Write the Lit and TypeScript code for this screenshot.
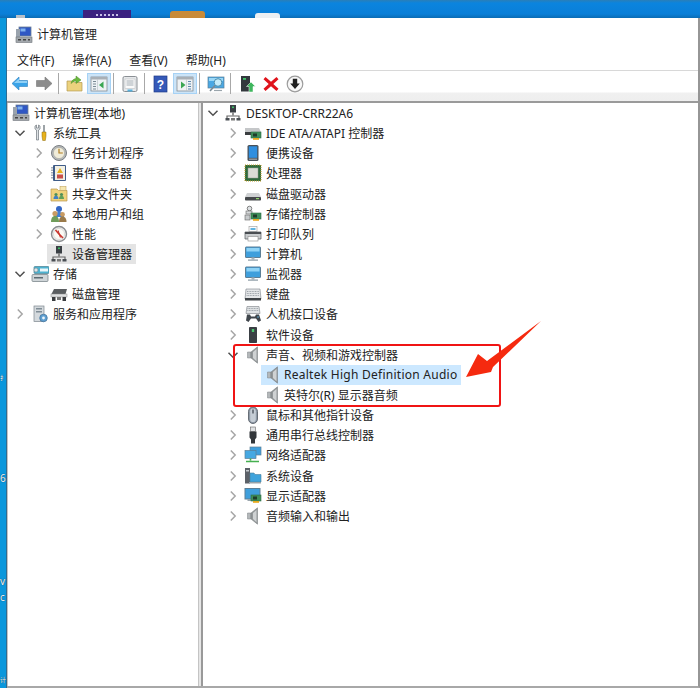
import { LitElement, html, css, svg, nothing } from "lit";
import { customElement } from "lit/decorators.js";

const monitorScreen = svg`<rect x="1.5" y="2" width="15" height="10.5" rx=".5" fill="#3f9fdc" stroke="#5c7f96"/><rect x="2.5" y="3" width="13" height="3.5" fill="#8fd3f6"/><rect x="7.5" y="12.5" width="3" height="2" fill="#a8b4bc"/><rect x="4" y="14.5" width="10" height="1.2" fill="#8b9aa4"/>`;
const greenCard = svg`<rect x="7" y="8" width="10" height="6" fill="#3f8f5a" stroke="#2c6b43" stroke-width=".6"/><rect x="9" y="9.5" width="4" height="3" fill="#1f3d2b"/><rect x="9" y="14" width="6" height="1.8" fill="#e6a91e"/>`;
const speaker = svg`<path d="M3.5 6h3.5v6H3.500z" fill="#b4b8ba" stroke="#7d8284" stroke-width=".5"/><path d="M7 6 13.500 .8V17.200L7 12z" fill="#94989a" stroke="#6f7476" stroke-width=".5"/><path d="M9 6 12.500 3V15.200L9 12z" fill="#cfd2d3"/>`;
const computerTree = svg`<rect x="6" y="1" width="6" height="7.5" fill="#3a3f44"/><rect x="8" y="2.5" width="2" height="1.6" fill="#3fbf66"/><rect x="8.3" y="8.5" width="1.4" height="3" fill="#666"/><path d="M3 15.5v-3.5h12v3.5" fill="none" stroke="#666" stroke-width="1.2"/><rect x="1.5" y="14" width="4" height="2.5" fill="#4a4f54"/><rect x="12.5" y="14" width="4" height="2.5" fill="#4a4f54"/><rect x="7" y="14" width="4" height="2.5" fill="#777"/>`;

const ICONS: Record<string, unknown> = {
  mgmt: svg`<rect x="4" y="1" width="12" height="9" fill="#2f57c4" stroke="#6c7f95" stroke-width=".8"/><rect x="5.5" y="2.5" width="5" height="3" fill="#7fb2ee"/><rect x="1" y="3" width="4" height="9" fill="#9aa3ad"/><rect x="1" y="11" width="16" height="5.5" fill="#a3a8ad" stroke="#6f757a" stroke-width=".6"/><rect x="3" y="13" width="3" height="1.5" fill="#444"/><rect x="8" y="13" width="3" height="1.5" fill="#444"/><rect x="13" y="13" width="2" height="1.5" fill="#444"/>`,
  tools: svg`<path d="M4 2v3l1.5 1v10h2V6L9 5V2L7.5 1v3h-2V1z" fill="#dfe3e6" stroke="#6f767c" stroke-width=".7"/><rect x="12" y="1" width="2" height="7" fill="#9ea4a8"/><path d="M11 8h4v4l-.7 4.5h-2.6L11 12z" fill="#e8b21c" stroke="#8f6d10" stroke-width=".5"/>`,
  clock: svg`<circle cx="9" cy="9" r="7.5" fill="#b6b9bb" stroke="#7b7f82"/><circle cx="9" cy="9" r="5.6" fill="#f0ecd9" stroke="#9d9f99" stroke-width=".5"/><path d="M9 4.8V9h3.8" fill="none" stroke="#b07c20" stroke-width="1.2"/>`,
  event: svg`<rect x="3" y="1" width="13" height="16" rx="1" fill="#3f5c88"/><rect x="5" y="2" width="10" height="14" fill="#f2f0e4"/><path d="M10 4l3 5h-6z" fill="#e8b21c"/><rect x="7" y="10.5" width="6" height="4" fill="#c9504a"/><path d="M2 3v12" stroke="#8a94a0" stroke-width="1.5" stroke-dasharray="1.5 1"/>`,
  share: svg`<path d="M1 4h6l1.5 1.5H17V16H1z" fill="#f0d27c" stroke="#b9974a" stroke-width=".7"/><rect x="10" y="1.5" width="6" height="4" fill="#f6e7b0" stroke="#b9974a" stroke-width=".5"/><circle cx="6" cy="9.5" r="1.6" fill="#4e8f5a"/><path d="M3.5 14c0-2.5 1-3 2.5-3s2.5.5 2.5 3z" fill="#3f7fc4"/><circle cx="11.5" cy="9.5" r="1.6" fill="#4e8f5a"/><path d="M9 14c0-2.5 1-3 2.5-3s2.5.5 2.5 3z" fill="#5f9f5a"/>`,
  users: svg`<circle cx="9" cy="4" r="3" fill="#3467c4"/><path d="M5 12c0-4 2-5 4-5s5 1 5 5z" fill="#3f7fd4"/><circle cx="5" cy="8.5" r="2.6" fill="#c99b62"/><path d="M1 17c0-4.500 2-6 4-6s4 1.500 4 6z" fill="#6f9c5a"/><circle cx="12.500" cy="9.500" r="2.400" fill="#c99b62"/><path d="M9 17c0-4 1.500-5.500 3.500-5.500S16.500 13 16.500 17z" fill="#9a7a4a"/>`,
  perf: svg`<circle cx="9" cy="9" r="7.5" fill="#eee" stroke="#8a8d90" stroke-width="1.4"/><circle cx="9" cy="9" r="5.5" fill="#fbfaf5" stroke="#c4c4c0" stroke-width=".5"/><path d="M5.500 5l3 3.500 1 1 3.500 3.500" fill="none" stroke="#c8352e" stroke-width="1.600"/><path d="M8 5.500l2.500 7" fill="none" stroke="#c8352e" stroke-width="1.100"/>`,
  devmgr: computerTree,
  root: computerTree,
  storage: svg`<rect x="1" y="9.500" width="16" height="7" rx="1" fill="#cfd5d8" stroke="#6f7a80" stroke-width=".7"/><rect x="3" y="12" width="9" height="1.500" fill="#5b6a72"/><rect x="3" y="1.500" width="15" height="7" rx="1" fill="#4cb2d0" stroke="#4a7f90" stroke-width=".7"/><rect x="9" y="3.500" width="8" height="3" fill="#eaf6fa"/><circle cx="5" cy="5" r="2" fill="#dfe6e9" stroke="#6f7a80" stroke-width=".5"/>`,
  diskm: svg`<path d="M4 4h13l-1.500 5H1.500z" fill="#5a5d60"/><rect x="1" y="9" width="16" height="3" fill="#dfe0e1" stroke="#888" stroke-width=".5"/><rect x="2" y="12" width="3.500" height="4" fill="#3a3c3f"/><rect x="12.500" y="12" width="3.500" height="4" fill="#3a3c3f"/><rect x="7" y="12" width="4" height="3" fill="#777"/>`,
  services: svg`<rect x="3" y="1" width="10" height="15.500" fill="#d4d9dd" stroke="#7d878e" stroke-width=".7"/><rect x="5" y="3" width="6" height="1.500" fill="#7f8c95"/><rect x="5" y="6" width="6" height="1.500" fill="#7f8c95"/><circle cx="12.500" cy="13" r="3.800" fill="#5f9fd0" stroke="#3f6f96" stroke-width=".7"/><circle cx="12.500" cy="13" r="1.400" fill="#eef6fb"/>`,
  ide: svg`<path d="M1 4h14l2 4H1z" fill="#c5c7c9"/><rect x="1" y="8" width="10" height="3" fill="#3a3d40"/>${greenCard}`,
  portable: svg`<rect x="3.500" y="1" width="11" height="16" rx="1.500" fill="#4a5158"/><rect x="4.800" y="2.300" width="8.400" height="11.500" fill="#2f8fe0"/><rect x="5" y="14.500" width="8" height="1.500" fill="#8e959b"/>`,
  cpu: svg`<rect x="1" y="1" width="16" height="16" fill="#2e6b3e" stroke="#c09a2a" stroke-dasharray="1 1"/><rect x="4" y="4" width="10" height="10" fill="#dadcd6" stroke="#9a9c96" stroke-width=".5"/>`,
  disk: svg`<path d="M3 8h12l2 4H1z" fill="#cfd1d3"/><rect x="1" y="12" width="16" height="3.500" rx=".8" fill="#45484b"/><rect x="12" y="13" width="3" height="1.200" fill="#8fd46f"/>`,
  storctl: svg`<circle cx="5.500" cy="3.500" r="2.300" fill="#e0e3e5" stroke="#555" stroke-width=".7"/><rect x="2" y="6" width="6" height="3" fill="#d7dadc" stroke="#666" stroke-width=".6"/><rect x="1" y="10" width="5" height="5" fill="#c7cacc" stroke="#666" stroke-width=".6"/>${greenCard}`,
  printer: svg`<rect x="5" y="1.500" width="8" height="5" fill="#fdfdfd" stroke="#9a9a9a" stroke-width=".6"/><rect x="6.500" y="3" width="5" height="2" fill="#5fb3e0"/><path d="M1 7h16v7H1z" fill="#c9ccce" stroke="#55595c" stroke-width=".7"/><rect x="1" y="7" width="16" height="2" fill="#4a4e52"/><rect x="4" y="11.500" width="10" height="4.500" fill="#fff" stroke="#8a8a8a" stroke-width=".6"/>`,
  computer: monitorScreen,
  monitor: monitorScreen,
  keyboard: svg`<path d="M2 4h14l1 10H1z" fill="#e4e6e8" stroke="#7a8086" stroke-width=".6"/><path d="M3 6.500h12M2.800 8.500h12.400M2.600 10.500h12.800" stroke="#9ea4aa" stroke-dasharray="1 .6"/><rect x="1" y="13" width="16" height="2.500" fill="#3f4347"/>`,
  hid: svg`<path d="M3 1.500h12l1 7H2z" fill="#dfe2e4" stroke="#7a8086" stroke-width=".6"/><path d="M3.500 3.500h11M3.300 5.500h11.400" stroke="#9ea4aa" stroke-dasharray="1 .6"/><path d="M3 9.500h3l1 2h4l1-2h3l2 6-2.500 1.500-2.500-3.500H7l-2.500 3.500L2 15.500z" fill="#40464c"/><circle cx="14" cy="12" r=".8" fill="#5fb3e0"/>`,
  software: svg`<rect x="5" y="1" width="8" height="16" rx=".8" fill="#3a3f44"/><rect x="7.800" y="3" width="2.400" height="3" fill="#4ac46e"/>`,
  speaker,
  mouse: svg`<rect x="4.500" y="1" width="9" height="16.500" rx="4.500" fill="#8f9aa6" stroke="#4e565e" stroke-width=".8"/><rect x="6.200" y="2.500" width="5.600" height="13.500" rx="2.800" fill="#c6ced6"/><rect x="8.300" y="3.500" width="1.400" height="4" fill="#4e565e"/>`,
  usb: svg`<rect x="6.500" y="1" width="5" height="4.500" fill="#dfe1e3" stroke="#666" stroke-width=".6"/><path d="M5.500 5.500h7v6l-1.500 2v4H7v-4l-1.500-2z" fill="#33373b"/>`,
  network: svg`<rect x="6" y="1" width="11" height="8" fill="#3f9fdc" stroke="#5c7f96" stroke-width=".7"/><rect x="1" y="4.500" width="11" height="8" fill="#46a8e2" stroke="#5c7f96" stroke-width=".7"/><path d="M6.500 12.500v2M2 15.500h13" stroke="#46b04f" stroke-width="1.600"/>`,
  system: svg`<rect x="1" y="1" width="5" height="15.500" fill="#5c6168"/><rect x="2" y="3" width="3" height="1.500" fill="#c5cace"/><path d="M6 6h4l1 1.500h6V15H6z" fill="#3fa3dc" stroke="#4a7f9c" stroke-width=".6"/><rect x="5" y="15" width="12" height="1.500" fill="#9aa3a9"/>`,
  display: svg`<rect x="1" y="1.500" width="15" height="10.500" fill="#3f9fdc" stroke="#5c7f96"/><rect x="3.500" y="12" width="8" height="2" fill="#9aa5ac"/>${greenCard}`,
};

const ICON_TB: Record<string, unknown> = {
  back: svg`<path d="M1 8.500 8 2v3.500h8.500v6H8V15z" fill="#3aa3e8" stroke="#2f7fbe" stroke-width=".6"/><path d="M3 8 8 3.500V6h8v2z" fill="#8fd0f6"/>`,
  fwd: svg`<path d="M17 8.500 10 2v3.500H1.500v6H10V15z" fill="#8c8c8c" stroke="#757575" stroke-width=".6"/>`,
  up: svg`<path d="M1 6h6l1.500 1.500H16V16H1z" fill="#ecd27e" stroke="#b39a50" stroke-width=".7"/><path d="M5 8.500c.5-3 2.500-4.500 5-5V1l5 4-5 3.500V6c-2 .3-3.500 1-5 2.500z" fill="#6cb93e" stroke="#4a8a2a" stroke-width=".5"/>`,
  pane: svg`<rect x="1" y="2" width="16" height="14" fill="#eef2f5" stroke="#7a8288" stroke-width=".7"/><rect x="1" y="2" width="16" height="2.500" fill="#a9b0b6"/><path d="M3 6.500h3M3 9h3M3 11.500h3M3 14h3" stroke="#7a8a94" stroke-width="1"/><path d="M13.500 6.500v7L9 10z" fill="#3aa653"/><path d="M7.500 4.500v11.500" stroke="#b9c0c5" stroke-width=".6"/>`,
  pane2: svg`<rect x="1" y="2" width="16" height="14" fill="#eef2f5" stroke="#7a8288" stroke-width=".7"/><rect x="1" y="2" width="16" height="2.500" fill="#a9b0b6"/><path d="M12 6.500h3M12 9h3M12 11.500h3M12 14h3" stroke="#5c87ac" stroke-width="1"/><path d="M5 6.500v7L9.500 10z" fill="#3aa653"/><path d="M10.500 4.500v11.500" stroke="#b9c0c5" stroke-width=".6"/>`,
  props: svg`<rect x="2" y="1.500" width="14" height="15" rx="1.500" fill="#e6e8ea" stroke="#8a8f94"/><rect x="4" y="4" width="10" height="9.500" fill="#fafafa" stroke="#b5b9bd" stroke-width=".5"/><path d="M5.500 6h7M5.500 8h7M5.500 10h7" stroke="#9aa4ab" stroke-width=".9"/><rect x="6.500" y="14.500" width="5" height="2" fill="#56b0dc"/>`,
  help: svg`<rect x="2" y="1" width="13" height="16" fill="#3559b8" stroke="#1f3a86" stroke-width=".7"/><text x="8.500" y="13.500" font-size="12" font-weight="700" text-anchor="middle" fill="#fff" font-family="Liberation Sans, sans-serif">?</text>`,
  search: svg`<rect x="1" y="2" width="16" height="11" fill="#4aa8e4" stroke="#5c7f96" stroke-width=".7"/><rect x="2" y="3" width="14" height="3" fill="#9ad8f8"/><circle cx="11" cy="7.500" r="3.800" fill="#c6ecfa" stroke="#4e8fae"/><path d="M8 10.500 3 16" stroke="#7a8a94" stroke-width="1.600"/><path d="M7 15.500h8" stroke="#9aa5ac" stroke-width="1.200"/>`,
  update: svg`<rect x="3" y="1" width="9" height="15.500" fill="#33383d"/><rect x="5" y="3" width="3" height="1.800" fill="#43c56b"/><path d="M13 7l4.500 4.500H15V17h-4v-5.500H8.500z" fill="#3fb65e" stroke="#fff" stroke-width=".5"/>`,
  del: svg`<path d="M3.500 2 9 6.800 14.500 2l2 2.200L11.300 9l5.200 4.800-2 2.200L9 11.200 3.500 16l-2-2.200L6.700 9 1.500 4.200z" fill="#e0141c"/>`,
  down: svg`<circle cx="9" cy="9" r="7.800" fill="#f8f8f8" stroke="#9c9c9c" stroke-width="1.200"/><path d="M6.800 3.800h4.400v4.800h2.600L9 14 4.200 8.600h2.600z" fill="#1f1f1f"/>`,
};

type Node = { l: number; icon: string; text: string; chev?: "r" | "d"; sel?: "grey" | "blue"; wide?: boolean; tight?: boolean; top?: boolean };

const LEFT: Node[] = [
  { l: 1, icon: "mgmt", text: "计算机管理(本地)", top: true },
  { l: 3, icon: "tools", text: "系统工具", chev: "d" },
  { l: 22, icon: "clock", text: "任务计划程序", chev: "r" },
  { l: 22, icon: "event", text: "事件查看器", chev: "r" },
  { l: 22, icon: "share", text: "共享文件夹", chev: "r" },
  { l: 22, icon: "users", text: "本地用户和组", chev: "r" },
  { l: 22, icon: "perf", text: "性能", chev: "r" },
  { l: 22, icon: "devmgr", text: "设备管理器", sel: "grey" },
  { l: 3, icon: "storage", text: "存储", chev: "d" },
  { l: 22, icon: "diskm", text: "磁盘管理" },
  { l: 3, icon: "services", text: "服务和应用程序", chev: "r" },
];

const RIGHT: Node[] = [
  { l: 1, icon: "root", text: "DESKTOP-CRR22A6", chev: "d" },
  { l: 21, icon: "ide", text: "IDE ATA/ATAPI 控制器", chev: "r" },
  { l: 21, icon: "portable", text: "便携设备", chev: "r" },
  { l: 21, icon: "cpu", text: "处理器", chev: "r" },
  { l: 21, icon: "disk", text: "磁盘驱动器", chev: "r" },
  { l: 21, icon: "storctl", text: "存储控制器", chev: "r" },
  { l: 21, icon: "printer", text: "打印队列", chev: "r" },
  { l: 21, icon: "computer", text: "计算机", chev: "r" },
  { l: 21, icon: "monitor", text: "监视器", chev: "r" },
  { l: 21, icon: "keyboard", text: "键盘", chev: "r" },
  { l: 21, icon: "hid", text: "人机接口设备", chev: "r" },
  { l: 21, icon: "software", text: "软件设备", chev: "r" },
  { l: 21, icon: "speaker", text: "声音、视频和游戏控制器", chev: "d" },
  { l: 41, icon: "speaker", text: "Realtek High Definition Audio", sel: "blue", wide: true, tight: true },
  { l: 41, icon: "speaker", text: "英特尔(R) 显示器音频", tight: true },
  { l: 21, icon: "mouse", text: "鼠标和其他指针设备", chev: "r" },
  { l: 21, icon: "usb", text: "通用串行总线控制器", chev: "r" },
  { l: 21, icon: "network", text: "网络适配器", chev: "r" },
  { l: 21, icon: "system", text: "系统设备", chev: "r" },
  { l: 21, icon: "display", text: "显示适配器", chev: "r" },
  { l: 21, icon: "speaker", text: "音频输入和输出", chev: "r" },
];

const DESK_MARKS = [
  { y: 371, t: "扌", s: 6 },
  { y: 471, t: "6", s: 10 },
  { y: 574, t: "v", s: 10 },
  { y: 590, t: "c", s: 10 },
  { y: 673, t: "计", s: 6 },
];

const icon18 = (c: unknown) => html`<svg class="ico" viewBox="0 0 18 18" width="18" height="18">${c}</svg>`;

@customElement("app-root")
export class AppRoot extends LitElement {
  static styles = css`
    :host {
      display: block;
      position: relative;
      width: 700px;
      height: 688px;
      overflow: hidden;
      background: #0a97dc;
      font-family: "Noto Sans", "Noto Sans CJK SC", sans-serif;
      font-size: 12px;
      color: #222;
    }
    .strip {
      height: 18px;
      display: flex;
      align-items: flex-end;
      background: linear-gradient(#2a7fb8 0, #0b84de 3px, #0a7fd8 14px, #0b6cb4 18px);
    }
    .dk { display: block; }
    .dk0 { width: 9px; height: 3px; margin-left: 16px; background: #b9c0c8; }
    .dk1 { width: 48px; height: 8px; margin-left: 58px; background: #3b2180; position: relative; }
    .dk1::after {
      content: "";
      position: absolute;
      left: 13px;
      right: 13px;
      top: 4px;
      height: 2px;
      background: repeating-linear-gradient(90deg, #c8c0e6 0 2px, transparent 2px 4px);
    }
    .dk2 { width: 35px; height: 7px; margin-left: 39px; background: #c88a38; border-radius: 3px 3px 0 0; }
    .dk3 { width: 25px; height: 5px; margin-left: 50px; background: #eceff2; border-radius: 3px 3px 0 0; }
    .main { display: flex; height: 670px; }
    .desk { width: 6px; position: relative; overflow: hidden; flex: none; border-right: 1px solid #2d6c92; box-sizing: content-box; }
    .mark { position: absolute; left: 0; line-height: 14px; color: #f2f6f8; text-shadow: 0 0 1px #123; }
    .win {
      flex: 1;
      min-width: 0;
      display: flex;
      flex-direction: column;
      background: #fff;
      border-right: 2px solid #969696;
      border-bottom: 2px solid #a8a8a8;
    }
    .title { height: 32px; display: flex; align-items: center; padding: 0 0 0 8px; gap: 4px; flex: none; }
    .title .ico { margin-top: 1px; }
    .title span { color: #1f1f1f; }
    .menu { height: 20px; display: flex; align-items: center; padding-left: 10px; gap: 18px; flex: none; }
    .tb {
      flex: none;
      display: flex;
      align-items: flex-start;
      padding: 2px 0 0 1px;
      border-top: 1px solid #d8d8d8;
      background: linear-gradient(#fff 0, #fff 21px, #f0f0f0 22px, #eeeeee 100%);
      box-sizing: content-box;
      height: 28px;
    }
    .btn { width: 24px; height: 21px; display: flex; align-items: center; justify-content: center; flex: none; box-sizing: border-box; }
    .btn.on { background: #cce4f7; border: 1px solid #a6d2f5; }
    .sep { width: 1px; height: 21px; background: #a8a8a8; margin: 0 4px 0 2px; flex: none; }
    .panes { flex: 1; min-height: 0; display: flex; border-top: 2px solid #9a9a9a; background: #f0f0f0; }
    .pane { background: #fff; overflow: hidden; }
    .pl { width: 190px; flex: none; border-left: 1px solid #c4c4c4; border-right: 1px solid #c4c4c4; }
    .gap { width: 2px; flex: none; background: #e6e6e6; border-right: 2px solid #999; }
    .pr { flex: 1; min-width: 0; }
    .row { height: 20.15px; display: flex; align-items: stretch; box-sizing: border-box; }
    .chev { width: 17px; flex: none; display: flex; align-items: center; justify-content: center; }
    .label { display: flex; align-items: center; gap: 4px; padding: 0 4px 0 3px; white-space: nowrap; }
    .label.tight { gap: 2px; }
    .label.grey { background: #e4e4e4; }
    .label.blue { background: #cce8ff; }
    .wide { letter-spacing: 0.26px; }
    .ico { flex: none; display: block; }
    .box {
      position: absolute;
      left: 233px;
      top: 344px;
      width: 268px;
      height: 63px;
      box-sizing: border-box;
      border: 2.5px solid #f01414;
      border-radius: 3px;
      pointer-events: none;
    }
    .arrow { position: absolute; left: 0; top: 0; pointer-events: none; }
  `;

  private row(n: Node) {
    const chev =
      n.chev === "r"
        ? html`<svg viewBox="0 0 8 12" width="8" height="12"><path d="M1.800 1.500 6.200 6 1.800 10.500" fill="none" stroke="#a6a6a6" stroke-width="1.500"/></svg>`
        : n.chev === "d"
          ? html`<svg viewBox="0 0 12 8" width="12" height="8"><path d="M1.500 1.800 6 6.200 10.500 1.800" fill="none" stroke="#4f4f4f" stroke-width="1.500"/></svg>`
          : nothing;
    return html`<div class="row" style="padding-left:${n.l}px">
      ${n.top ? nothing : html`<span class="chev">${chev}</span>`}
      <div class="label ${n.sel ?? ""} ${n.tight ? "tight" : ""}">
        ${icon18(ICONS[n.icon])}<span class=${n.wide ? "wide" : ""}>${n.text}</span>
      </div>
    </div>`;
  }

  render() {
    const btn = (k: string, on = false) => html`<span class="btn ${on ? "on" : ""}">${icon18(ICON_TB[k])}</span>`;
    const sep = html`<span class="sep"></span>`;
    return html`
      <div class="strip">
        <i class="dk dk0"></i><i class="dk dk1"></i><i class="dk dk2"></i><i class="dk dk3"></i>
      </div>
      <div class="main">
        <div class="desk">
          ${DESK_MARKS.map((m) => html`<span class="mark" style="top:${m.y - 18}px;font-size:${m.s}px">${m.t}</span>`)}
        </div>
        <div class="win">
          <div class="title">${icon18(ICONS.mgmt)}<span>计算机管理</span></div>
          <div class="menu">
            <span>文件(F)</span><span>操作(A)</span><span>查看(V)</span><span>帮助(H)</span>
          </div>
          <div class="tb">
            ${btn("back")}${btn("fwd")}${sep}${btn("up")}${btn("pane", true)}${sep}${btn("props")}${sep}${btn("help")}${btn("pane2", true)}${sep}${btn("search")}${sep}${btn("update")}${btn("del")}${btn("down")}
          </div>
          <div class="panes">
            <div class="pane pl">${LEFT.map((n) => this.row(n))}</div>
            <div class="gap"></div>
            <div class="pane pr">${RIGHT.map((n) => this.row(n))}</div>
          </div>
        </div>
      </div>
      <div class="box"></div>
      <svg class="arrow" width="700" height="688" viewBox="0 0 700 688">
        <polygon points="466,377 478,354 487,361 541,321 493,367 491,372" fill="#f52a0f"/>
      </svg>
    `;
  }
}
